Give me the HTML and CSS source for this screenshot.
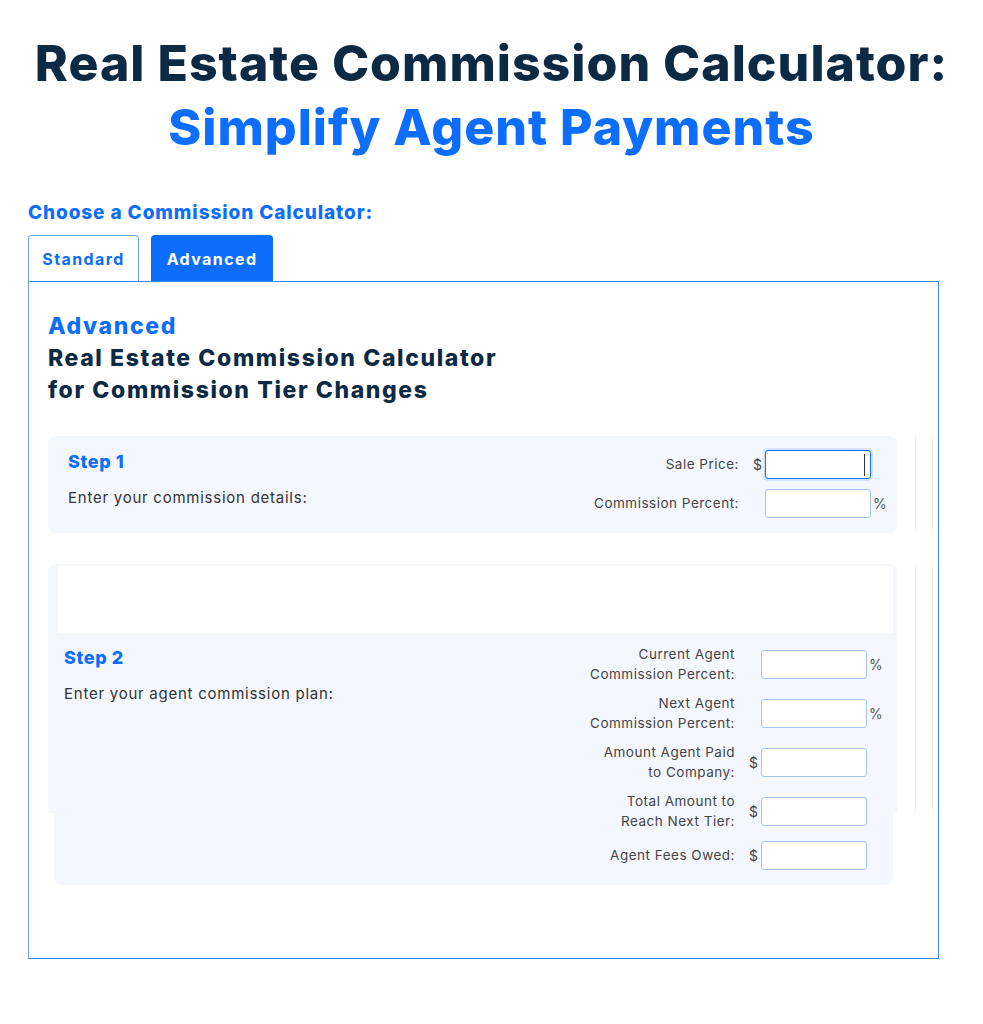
FILE: index.html
```html
<!DOCTYPE html>
<html lang="en">
<head>
<meta charset="utf-8">
<title>Real Estate Commission Calculator</title>
<link rel="stylesheet" href="styles.css">
</head>
<body>
<h1 class="title"><span class="t1">Real Estate Commission Calculator:</span><span class="t2">Simplify Agent Payments</span></h1>
<main class="wrap">
  <p class="choose">Choose a Commission Calculator:</p>
  <div class="tabs">
    <button class="tab">Standard</button>
    <button class="tab active">Advanced</button>
  </div>
  <section class="panel">
    <h2 class="panel-title"><span class="kind">Advanced</span><span class="line">Real Estate Commission Calculator</span><span class="line">for Commission Tier Changes</span></h2>

    <div class="step-row step1-row">
      <div class="card step1">
        <div class="step-text">
          <h3>Step 1</h3>
          <p>Enter your commission details:</p>
        </div>
        <div class="fields">
          <div class="field"><label>Sale Price:</label><span class="pre">$</span><span class="inp-wrap"><input class="inp focus" type="text"><span class="caret"></span></span><span class="suf"></span></div>
          <div class="field"><label>Commission Percent:</label><span class="pre"></span><span class="inp-wrap"><input class="inp" type="text"></span><span class="suf">%</span></div>
        </div>
      </div>
      <div class="ghost"></div>
    </div>

    <div class="step-row step2-row">
      <div class="card2-wrap">
        <div class="spacer"></div>
        <div class="card step2">
          <div class="step-text">
            <h3>Step 2</h3>
            <p>Enter your agent commission plan:</p>
          </div>
          <div class="fields">
            <div class="field"><label>Current Agent<br>Commission Percent:</label><span class="pre"></span><span class="inp-wrap"><input class="inp" type="text"></span><span class="suf">%</span></div>
            <div class="field"><label>Next Agent<br>Commission Percent:</label><span class="pre"></span><span class="inp-wrap"><input class="inp" type="text"></span><span class="suf">%</span></div>
            <div class="field"><label>Amount Agent Paid<br>to Company:</label><span class="pre">$</span><span class="inp-wrap"><input class="inp" type="text"></span><span class="suf"></span></div>
            <div class="field"><label>Total Amount to<br>Reach Next Tier:</label><span class="pre">$</span><span class="inp-wrap"><input class="inp" type="text"></span><span class="suf"></span></div>
            <div class="field"><label>Agent Fees Owed:</label><span class="pre">$</span><span class="inp-wrap"><input class="inp" type="text"></span><span class="suf"></span></div>
          </div>
        </div>
      </div>
      <div class="ghost"></div>
    </div>
  </section>
</main>
</body>
</html>
```
FILE: styles.css
```css
* { box-sizing: border-box; }
body {
  margin: 0;
  background: #fff;
  font-family: Inter, "Open Sans", "Liberation Sans", sans-serif;
  color: #333;
}
.title {
  margin: 31px 0 0;
  text-align: center;
  font-weight: 800;
  font-size: 50px;
  line-height: 64px;
  letter-spacing: 1px;
}
.title span { display: block; }
.t1 { color: #0d2a45; }
.t2 { color: #0d6efd; }

.wrap {
  width: 911px;
  margin: 0 0 0 28px;
}
.choose {
  margin: 42px 0 10px;
  font-size: 19px;
  line-height: 24px;
  font-weight: 800;
  color: #0d6efd;
  letter-spacing: 0.9px;
}
.tabs {
  display: flex;
  gap: 12px;
  height: 46px;
}
.tab {
  font-family: inherit;
  font-size: 16px;
  font-weight: 700;
  letter-spacing: 1.4px;
  height: 46px;
  border-radius: 4px 4px 0 0;
  border: 1px solid #6aa3f8;
  border-bottom: none;
  background: #fff;
  color: #0d6efd;
  padding: 0;
  width: 111px;
}
.tab.active {
  width: 122px;
  background: #0d6efd;
  border-color: #0d6efd;
  color: #fff;
}
.panel {
  height: 678px;
  border: 1px solid #3d86f5;
  border-left-color: #6aa3f8;
  padding: 28px 0 0 19px;
}
.panel-title {
  margin: 0;
  font-size: 23px;
  line-height: 32px;
  font-weight: 800;
  color: #0d2a45;
  letter-spacing: 1.6px;
}
.panel-title span { display: block; }
.panel-title .kind { color: #0d6efd; }

.step-row {
  display: flex;
  align-items: flex-start;
}
.step1-row { margin-top: 30px; }
.step2-row { margin-top: 31px; }
.ghost {
  width: 18px;
  margin-left: 18px;
  border-left: 1px solid #eef1f5;
  border-right: 1px solid #eef1f5;
}
.step1-row .ghost { height: 95px; }
.step2-row .ghost { height: 249px; margin-top: 1px; }

.card {
  background: #f4f7fe;
  display: flex;
  justify-content: space-between;
}
.step1 {
  width: 849px;
  height: 97px;
  border-radius: 8px;
  padding: 14px 0 15px 20px;
}
.card2-wrap {
  width: 849px;
  height: 249px;
  background: #f4f7fe;
  border-radius: 8px 8px 0 0;
  padding: 2px 4px 0 6px;
}
.spacer {
  height: 67px;
  margin-left: 4px;
  background: #fff;
}
.step2 {
  height: 252px;
  border-radius: 0 0 8px 8px;
  padding: 12px 0 15px 10px;
}
.step-text h3 {
  margin: 0;
  font-size: 18px;
  line-height: 24px;
  font-weight: 800;
  color: #0d6efd;
  letter-spacing: 0.6px;
}
.step-text p {
  margin: 13px 0 0;
  font-size: 15px;
  line-height: 22px;
  color: #333;
  letter-spacing: 0.75px;
}
.step2 .step-text { padding-top: 1px; }

.fields {
  display: flex;
  flex-direction: column;
  gap: 10px;
}
.field {
  display: grid;
  grid-template-columns: 190px 26px 106px 26px;
  align-items: center;
  min-height: 29px;
}
.field label {
  text-align: right;
  font-size: 13.5px;
  line-height: 19.5px;
  color: #444;
  letter-spacing: 0.5px;
}
.pre {
  text-align: right;
  padding-right: 3px;
  font-size: 14px;
  color: #444;
}
.suf {
  padding-left: 2px;
  font-size: 14px;
  color: #555;
}
.inp-wrap {
  position: relative;
  display: block;
  height: 29px;
}
.inp {
  display: block;
  width: 106px;
  height: 29px;
  margin: 0;
  padding: 0 6px;
  border: 1px solid #a8c6f5;
  border-radius: 3px;
  background: #fff;
  font-family: inherit;
  font-size: 14px;
  outline: none;
}
.inp.focus {
  border-color: #0d6efd;
  box-shadow: 0 0 0 2px #d5e5fd;
}
.caret {
  position: absolute;
  right: 6px;
  top: 4px;
  width: 1.5px;
  height: 22px;
  background: #333;
}
```
